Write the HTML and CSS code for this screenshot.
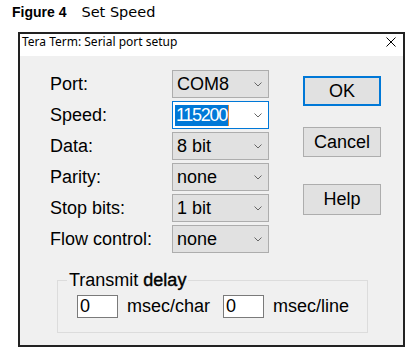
FILE: index.html
```html
<!DOCTYPE html>
<html>
<head>
<meta charset="utf-8">
<link rel="stylesheet" href="styles.css">
</head>
<body>
<div class="caption"><span class="fig">Figure 4</span><span class="figtitle">Set Speed</span></div>
<div class="dialog">
  <div class="titlebar">
    <span class="title">Tera Term: Serial port setup</span>
    <svg class="close" width="10" height="10" viewBox="0 0 10 10"><path d="M0.5 0.5 L9.5 9.5 M9.5 0.5 L0.5 9.5" stroke="#000" stroke-width="1" fill="none"/></svg>
  </div>
  <div class="body">
    <div class="main">
      <div class="form">
        <div class="label">Port:</div>
        <div class="combo"><span class="val">COM8</span><svg class="chev" width="8" height="5" viewBox="0 0 8 5"><path d="M0.5 0.5 L4 4 L7.5 0.5" stroke="#666" fill="none"/></svg></div>
        <div class="label">Speed:</div>
        <div class="combo focus"><span class="val"><span class="sel">115200</span></span><svg class="chev" width="8" height="5" viewBox="0 0 8 5"><path d="M0.5 0.5 L4 4 L7.5 0.5" stroke="#666" fill="none"/></svg></div>
        <div class="label">Data:</div>
        <div class="combo"><span class="val">8 bit</span><svg class="chev" width="8" height="5" viewBox="0 0 8 5"><path d="M0.5 0.5 L4 4 L7.5 0.5" stroke="#666" fill="none"/></svg></div>
        <div class="label">Parity:</div>
        <div class="combo"><span class="val">none</span><svg class="chev" width="8" height="5" viewBox="0 0 8 5"><path d="M0.5 0.5 L4 4 L7.5 0.5" stroke="#666" fill="none"/></svg></div>
        <div class="label">Stop bits:</div>
        <div class="combo"><span class="val">1 bit</span><svg class="chev" width="8" height="5" viewBox="0 0 8 5"><path d="M0.5 0.5 L4 4 L7.5 0.5" stroke="#666" fill="none"/></svg></div>
        <div class="label">Flow control:</div>
        <div class="combo"><span class="val">none</span><svg class="chev" width="8" height="5" viewBox="0 0 8 5"><path d="M0.5 0.5 L4 4 L7.5 0.5" stroke="#666" fill="none"/></svg></div>
      </div>
      <div class="buttons">
        <div class="btn ok">OK</div>
        <div class="btn cancel">Cancel</div>
        <div class="btn help">Help</div>
      </div>
    </div>
    <div class="group">
      <div class="legend">Transmit <span class="heavy">delay</span></div>
      <div class="delayrow">
        <div class="input">0</div>
        <span class="unit">msec/char</span>
        <div class="input second">0</div>
        <span class="unit">msec/line</span>
      </div>
    </div>
  </div>
</div>
</body>
</html>
```

FILE: styles.css
```css
* { box-sizing: border-box; }
body {
  margin: 0;
  background: #fff;
  font-family: "Liberation Sans", Arial, sans-serif;
  color: #000;
}
.caption {
  padding: 2px 0 0 12px;
  height: 22px;
  line-height: 20px;
  white-space: nowrap;
}
.fig {
  font-family: "Liberation Sans", Arial, sans-serif;
  font-weight: bold;
  font-size: 14px;
}
.figtitle {
  font-family: "DejaVu Sans", Verdana, sans-serif;
  font-size: 14.5px;
  margin-left: 15px;
}
.dialog {
  margin: 10px 0 0 18px;
  width: 387px;
  height: 315px;
  border: 2px solid #222;
  display: flex;
  flex-direction: column;
  background: #f0f0f0;
}
.titlebar {
  height: 22px;
  background: #fff;
  display: flex;
  align-items: flex-start;
  justify-content: space-between;
  padding: 0 7px 0 2px;
}
.title {
  font-family: "Noto Sans", sans-serif;
  font-size: 12px;
  line-height: 16px;
}
.close { margin-top: 3px; display: block; }
.body {
  flex: 1;
  padding: 14px 0 0 0;
}
.main {
  display: flex;
  align-items: flex-start;
  padding-left: 30px;
}
.form {
  display: grid;
  grid-template-columns: 122px 97px;
  grid-auto-rows: 28px;
  row-gap: 3px;
  font-size: 18px;
}
.label {
  display: flex;
  align-items: center;
  white-space: nowrap;
}
.combo {
  display: flex;
  align-items: center;
  justify-content: space-between;
  background: #e1e1e1;
  border: 1px solid #adadad;
  padding: 0 6px 0 4px;
  white-space: nowrap;
}
.combo.focus {
  background: #fff;
  border-color: #0078d7;
  padding-left: 2px;
}
.val { line-height: 21px; }
.sel {
  display: inline-block;
  background: #0078d7;
  color: #fff;
  padding: 0 1px 0 1px;
  letter-spacing: -1.3px;
  line-height: 21px;
  border-right: 1px solid #e08a3c;
}
.chev { display: block; }
.buttons {
  margin-left: 34px;
  width: 78px;
  display: flex;
  flex-direction: column;
}
.btn {
  height: 30px;
  background: #e1e1e1;
  border: 1px solid #adadad;
  font-size: 18px;
  display: flex;
  align-items: center;
  justify-content: center;
}
.ok { margin-top: 6px; border: 2px solid #0078d7; }
.cancel { margin-top: 21px; }
.help { margin-top: 27px; height: 31px; }
.group {
  margin: 27px 0 0 37px;
  width: 311px;
  border: 1px solid #dcdcdc;
  padding-bottom: 14px;
  font-size: 18px;
}
.legend {
  width: max-content;
  margin: -9px 0 0 9px;
  padding: 0 2px;
  height: 16px;
  line-height: 16px;
  background: #f0f0f0;
}
.heavy { -webkit-text-stroke: 0.4px #000; }
.delayrow {
  margin-top: 7px;
  padding-left: 19px;
  display: flex;
  align-items: center;
}
.input {
  width: 41px;
  height: 23px;
  background: #fff;
  border: 1px solid #7a7a7a;
  padding-left: 2px;
  line-height: 21px;
}
.unit { margin-left: 9px; }
.second { margin-left: 13px; }
```
